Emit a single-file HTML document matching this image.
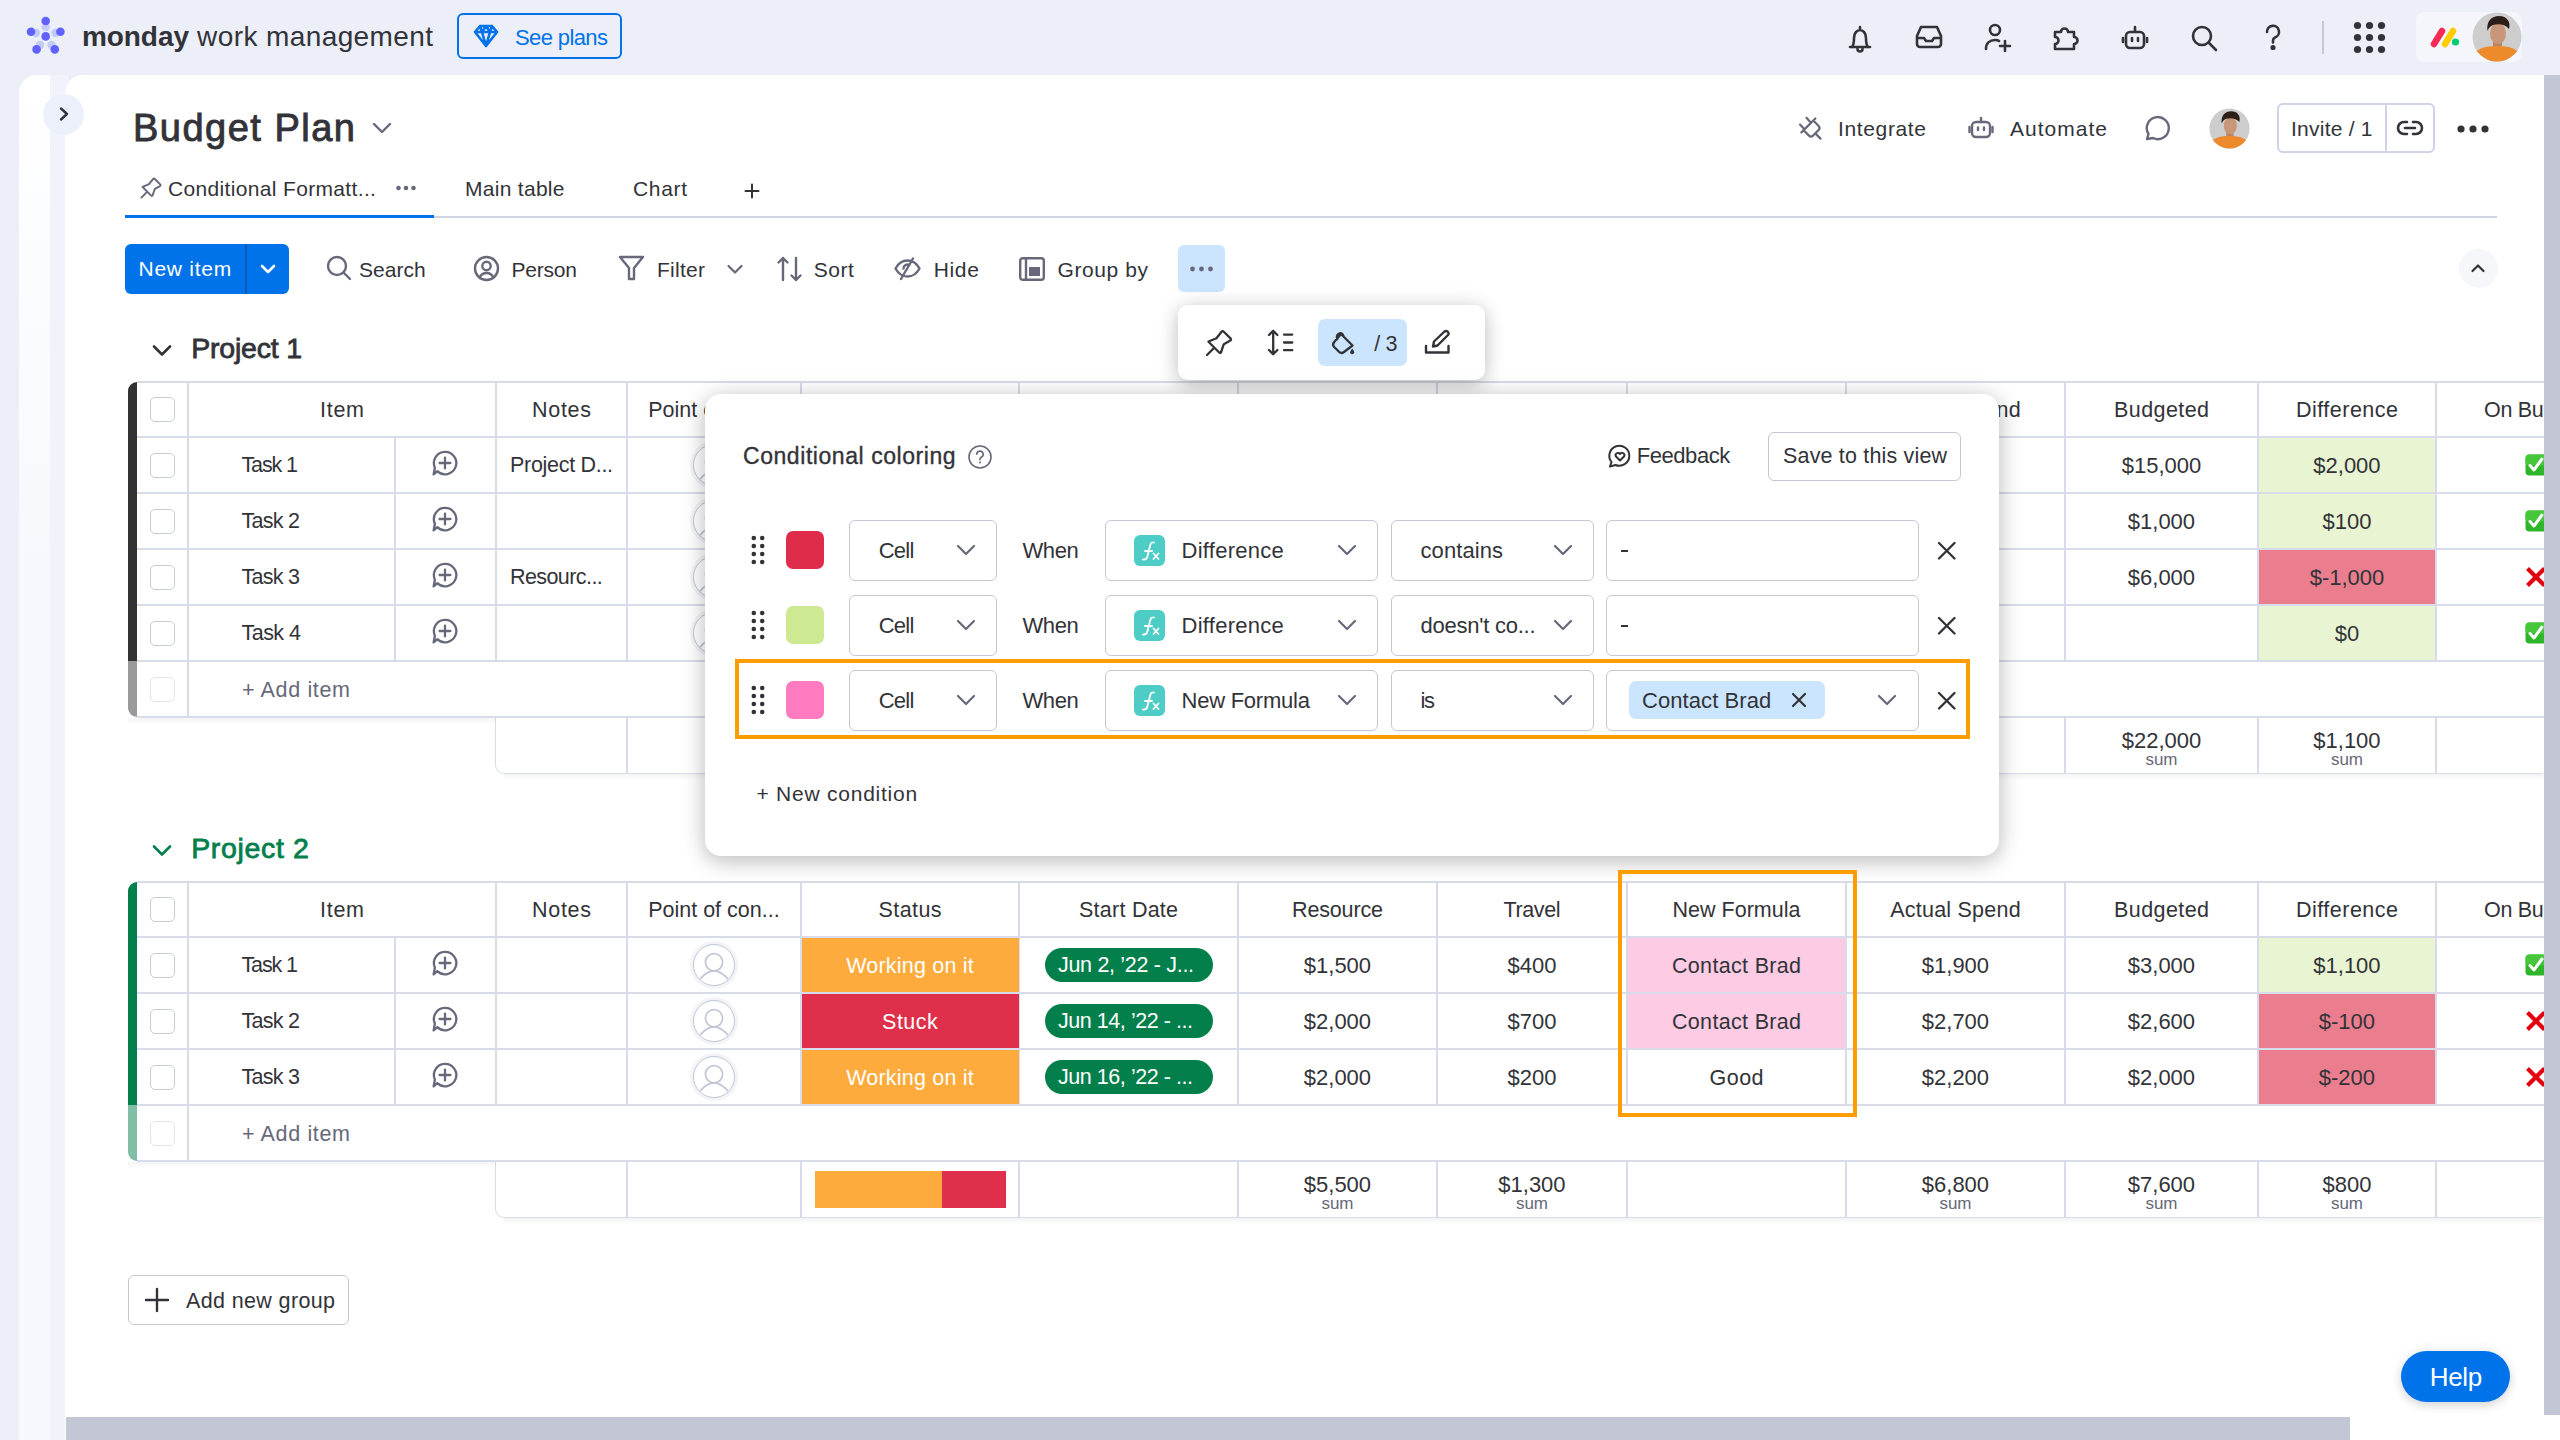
<!DOCTYPE html>
<html><head><meta charset="utf-8">
<style>
*{box-sizing:border-box;margin:0;padding:0}
html,body{width:2560px;height:1440px;overflow:hidden}
body{position:relative;background:#eceff8;font-family:"Liberation Sans",sans-serif;color:#323338}
.abs{position:absolute}
svg{display:block}
.ic{position:absolute;fill:none;stroke:#323338;stroke-width:2.6;stroke-linecap:round;stroke-linejoin:round}
.g{stroke:#676879}
.t{position:absolute;white-space:nowrap;line-height:1}
</style></head>
<body>


<div class="abs" style="left:19px;top:75px;width:50px;height:1365px;border-top-left-radius:18px;background:linear-gradient(90deg,rgba(255,255,255,0) 0,rgba(255,255,255,0) 31px,#f0f3fb 31px),linear-gradient(180deg,#ffffff 0,#f6f8fd 500px)"></div>
<div class="abs" style="left:65px;top:75px;width:2495px;height:1365px;background:#fff;border-top-left-radius:18px"></div>
<div class="abs" style="left:43px;top:94px;width:41px;height:41px;border-radius:50%;background:#ecf0fa"></div>
<svg class="ic" style="left:56px;top:104px;stroke-width:2.4" width="16" height="20" viewBox="0 0 16 20"><path d="M5 4.5l6 5.5-6 5.5"/></svg>
<div class="abs" style="left:2544px;top:75px;width:16px;height:1340px;background:#c3c6d4"></div>
<div class="abs" style="left:66px;top:1417px;width:2284px;height:23px;background:#c3c6d4"></div>

<svg class="abs" style="left:20px;top:12px" width="50" height="50" viewBox="20 12 50 50">
  <g fill="#c3cbf7">
   <circle cx="45.7" cy="27" r="4.2"/><circle cx="36" cy="33" r="4.2"/><circle cx="55.5" cy="33" r="4.2"/><circle cx="40" cy="45" r="4.2"/><circle cx="51.5" cy="45" r="4.2"/>
  </g>
  <g fill="#6161ff">
   <circle cx="45.7" cy="36.4" r="4.3"/><circle cx="45.7" cy="21" r="4.3"/><circle cx="31" cy="31.8" r="4.3"/><circle cx="60.4" cy="31.8" r="4.3"/><circle cx="36.6" cy="49.4" r="4.3"/><circle cx="54.8" cy="49.4" r="4.3"/>
  </g>
 </svg>
<div class="t" style="left:82.0px;top:23px;font-size:28px;color:#323338;font-weight:bold;letter-spacing:-0.08px;">monday</div>
<div class="t" style="left:197.1px;top:23px;font-size:28px;color:#323338;font-weight:normal;letter-spacing:0.40px;">work management</div>
<div class="abs" style="left:457px;top:13px;width:165px;height:46px;border:2px solid #0073ea;border-radius:6px"></div>
<svg class="ic" style="left:473px;top:24px;stroke:#0073ea;stroke-width:2.6" width="26" height="24" viewBox="0 0 26 24"><path d="M7 2h12l5 6-11 14L2 8z M2 8h22 M9 8l4 14 4-14 M7 2l2 6 4-6 4 6 2-6"/></svg>
<div class="t" style="left:515.0px;top:27px;font-size:22px;color:#0073ea;font-weight:normal;letter-spacing:-0.61px;">See plans</div>

 <svg class="ic" style="left:1846px;top:23px" width="28" height="30" viewBox="0 0 28 30"><path d="M4 24h20 M6 24c2-2 2-5 2-9 0-5 3-8 6-8s6 3 6 8c0 4 0 7 2 9 M14 4v3 M11.5 26a2.5 2.5 0 0 0 5 0"/></svg>
 <svg class="ic" style="left:1913px;top:24px" width="32" height="26" viewBox="0 0 32 26"><path d="M8 3h16l4 9v8a3 3 0 0 1-3 3H7a3 3 0 0 1-3-3v-8z M4 14h7l2 3h6l2-3h7"/></svg>
 <svg class="ic" style="left:1982px;top:22px" width="32" height="30" viewBox="0 0 32 30"><circle cx="13" cy="8" r="5"/><path d="M4 27c0-6 4-9 9-9 2 0 3 0 4 1 M23 19v10 M18 24h10"/></svg>
 <svg class="ic" style="left:2051px;top:22px" width="30" height="30" viewBox="0 0 30 30"><path d="M4 10h6a3.5 3.5 0 0 1 7 0h6v5a3.5 3.5 0 0 1 0 7v5H4v-5a3.5 3.5 0 0 0 0-7z"/></svg>
 <svg class="ic" style="left:2120px;top:24px" width="30" height="28" viewBox="0 0 30 28"><rect x="6" y="8" width="18" height="16" rx="4"/><path d="M15 3v5 M3 14v4 M27 14v4 M12 14v3 M18 14v3"/></svg>
 <svg class="ic" style="left:2189px;top:23px" width="30" height="30" viewBox="0 0 30 30"><circle cx="13" cy="13" r="9"/><path d="M20 20l7 7"/></svg>
 <svg class="ic" style="left:2262px;top:23px" width="22" height="30" viewBox="0 0 22 30"><path d="M5 9a6 6 0 1 1 8 5.5c-1.5.7-2 1.7-2 3v2"/><circle cx="11" cy="24.5" r="1.3" fill="#323338"/></svg>
 <div class="abs" style="left:2322px;top:21px;width:2px;height:33px;background:#c5c7d4"></div>
 <svg class="abs" style="left:2350px;top:18px" width="40" height="40" viewBox="2350 18 40 40" fill="#323338">
  <circle cx="2357.5" cy="25.5" r="3.6"/><circle cx="2369.5" cy="25.5" r="3.6"/><circle cx="2381.5" cy="25.5" r="3.6"/>
  <circle cx="2357.5" cy="37.5" r="3.6"/><circle cx="2369.5" cy="37.5" r="3.6"/><circle cx="2381.5" cy="37.5" r="3.6"/>
  <circle cx="2357.5" cy="49.5" r="3.6"/><circle cx="2369.5" cy="49.5" r="3.6"/><circle cx="2381.5" cy="49.5" r="3.6"/>
 </svg>
 <div class="abs" style="left:2416px;top:12px;width:106px;height:50px;border-radius:8px;background:#f5f6fc"></div>
 <svg class="abs" style="left:2425px;top:22px" width="40" height="30" viewBox="2425 22 40 30">
  <path d="M2434 44L2442 31" stroke="#f62b54" stroke-width="6.5" stroke-linecap="round"/>
  <path d="M2445 44L2453 31" stroke="#ffcc00" stroke-width="6.5" stroke-linecap="round"/>
  <circle cx="2455.5" cy="42" r="3.6" fill="#00ca72"/>
 </svg>

<svg class="abs" style="left:2472px;top:12px" width="50" height="50" viewBox="0 0 50 50">
  <defs><clipPath id="av1"><circle cx="25" cy="25" r="24.5"/></clipPath></defs>
  <g clip-path="url(#av1)">
   <rect width="50" height="50" fill="#cdcdcd"/>
   <rect x="21" y="28" width="9" height="8" fill="#b88568"/>
   <path d="M0 50L0 45C4 37 12 34 25 34C38 34 46 37 50 45L50 50z" fill="#ec8a2c"/>
   <ellipse cx="26" cy="21.5" rx="8" ry="10.5" fill="#c8977a"/>
   <path d="M15.5 19C14 9 20 4 27 4C35 4 39 10 37 17C33 12.5 27 11.5 21 13C18.5 14 16.5 16 15.5 19z" fill="#2b1f18"/>
  </g>
 </svg>
<div class="t" style="left:133.0px;top:109px;font-size:38px;color:#323338;font-weight:normal;letter-spacing:1.49px;-webkit-text-stroke:0.9px #323338;">Budget Plan</div>
<svg class="ic g" style="left:370px;top:118px;stroke-width:2.4" width="24" height="20" viewBox="0 0 24 20"><path d="M4 6l8 8 8-8"/></svg>
<svg class="ic g" style="left:1795px;top:113px;stroke-width:2.2" width="30" height="30" viewBox="1795 113 30 30"><path d="M1801.4 132.4L1815.4 118.5 M1800 124.6L1804.2 129 M1806.4 117.8L1810.5 122.2 M1803.6 130.2L1809 135.6Q1811 137.6 1813 135.6L1818.6 130Q1820.6 128 1818.6 126L1813.4 120.6 M1816.3 134.4L1820.5 138.6"/></svg>
<div class="t" style="left:1838.0px;top:118px;font-size:21px;color:#323338;font-weight:normal;letter-spacing:0.64px;">Integrate</div>
<svg class="ic g" style="left:1966px;top:115px;stroke-width:2.4" width="30" height="26" viewBox="0 0 30 26"><rect x="6" y="7" width="18" height="15" rx="4"/><path d="M15 3v4 M3.5 12v5 M26.5 12v5 M12 12.5v2.5 M18 12.5v2.5"/></svg>
<div class="t" style="left:2010.0px;top:118px;font-size:21px;color:#323338;font-weight:normal;letter-spacing:1.02px;">Automate</div>
<svg class="ic g" style="left:2143px;top:113px;stroke-width:2.4" width="30" height="30" viewBox="0 0 30 30"><path d="M4 26l1.5-5A11 11 0 1 1 10 25z"/></svg>
<svg class="abs" style="left:2209px;top:107.5px" width="41" height="41" viewBox="0 0 50 50">
  <defs><clipPath id="av2"><circle cx="25" cy="25" r="24.5"/></clipPath></defs>
  <g clip-path="url(#av2)">
   <rect width="50" height="50" fill="#cdcdcd"/>
   <rect x="21" y="28" width="9" height="8" fill="#b88568"/>
   <path d="M0 50L0 45C4 37 12 34 25 34C38 34 46 37 50 45L50 50z" fill="#ec8a2c"/>
   <ellipse cx="26" cy="21.5" rx="8" ry="10.5" fill="#c8977a"/>
   <path d="M15.5 19C14 9 20 4 27 4C35 4 39 10 37 17C33 12.5 27 11.5 21 13C18.5 14 16.5 16 15.5 19z" fill="#2b1f18"/>
  </g>
 </svg>
<div class="abs" style="left:2277px;top:103px;width:158px;height:50px;border:2px solid #d0d4e4;border-radius:6px"></div>
<div class="abs" style="left:2385px;top:104px;width:2px;height:48px;background:#d0d4e4"></div>
<div class="t" style="left:2291.0px;top:118px;font-size:21px;color:#323338;font-weight:normal;letter-spacing:0.24px;">Invite / 1</div>
<svg class="ic" style="left:2396px;top:117px;stroke-width:2.6" width="28" height="22" viewBox="0 0 28 22"><path d="M11 5H8a6 6 0 0 0 0 12h3 M17 5h3a6 6 0 0 1 0 12h-3 M9 11h10"/></svg>
<svg class="abs" style="left:2455px;top:122px" width="36" height="14" viewBox="0 0 36 14" fill="#323338"><circle cx="6" cy="7" r="3.6"/><circle cx="18" cy="7" r="3.6"/><circle cx="30" cy="7" r="3.6"/></svg>
<svg class="ic g" style="left:138.9px;top:176.4px;stroke-width:2.4" width="23.2" height="23.2" viewBox="1204 328 29 29"><path d="M1207 355L1213.5 348.5 M1208.5 341.5L1216.5 338.2L1221.5 331.8Q1222.6 330.5 1223.8 331.7L1230.5 338.4Q1231.6 339.6 1230.3 340.6L1223.8 344.2L1221 352.3Q1220.4 353.6 1219.2 352.5L1208.5 341.8z"/></svg>
<div class="t" style="left:168.0px;top:178px;font-size:21px;color:#323338;font-weight:normal;letter-spacing:0.34px;">Conditional Formatt...</div>
<svg class="abs" style="left:394px;top:183px" width="24" height="10" viewBox="0 0 24 10" fill="#676879"><circle cx="4.5" cy="5" r="2.3"/><circle cx="12" cy="5" r="2.3"/><circle cx="19.5" cy="5" r="2.3"/></svg>
<div class="t" style="left:465.0px;top:178px;font-size:21px;color:#323338;font-weight:normal;letter-spacing:0.29px;">Main table</div>
<div class="t" style="left:633.0px;top:178px;font-size:21px;color:#323338;font-weight:normal;letter-spacing:0.66px;">Chart</div>
<svg class="ic" style="left:742px;top:181px;stroke-width:2" width="20" height="20" viewBox="0 0 20 20"><path d="M10 3.5v13 M3.5 10h13"/></svg>
<div class="abs" style="left:125px;top:216px;width:2372px;height:2px;background:#d0d4e4"></div>
<div class="abs" style="left:125px;top:214.5px;width:309px;height:3.5px;background:#0073ea"></div>
<div class="abs" style="left:125px;top:244px;width:164px;height:50px;border-radius:6px;background:#0073ea"></div>
<div class="abs" style="left:245px;top:244px;width:1.5px;height:50px;background:#0a5ab6"></div>
<div class="t" style="left:138.5px;top:258px;font-size:21px;color:#ffffff;font-weight:normal;letter-spacing:0.75px;">New item</div>
<svg class="ic" style="left:258px;top:259px;stroke:#fff;stroke-width:2.6" width="20" height="20" viewBox="0 0 20 20"><path d="M4 7l6 6 6-6"/></svg>
<svg class="ic g" style="left:325px;top:254px;stroke-width:2.4" width="28" height="28" viewBox="0 0 28 28"><circle cx="12" cy="12" r="9"/><path d="M18.5 18.5l6.5 6.5"/></svg>
<div class="t" style="left:359.0px;top:259px;font-size:21px;color:#323338;font-weight:normal;letter-spacing:0.03px;">Search</div>
<svg class="ic g" style="left:472px;top:254px;stroke-width:2.4" width="29" height="29" viewBox="0 0 29 29"><circle cx="14.5" cy="14.5" r="11.5"/><circle cx="14.5" cy="12" r="4.2"/><path d="M7.5 23.5c1.5-3 4-4.5 7-4.5s5.5 1.5 7 4.5"/></svg>
<div class="t" style="left:511.6px;top:259px;font-size:21px;color:#323338;font-weight:normal;letter-spacing:-0.23px;">Person</div>
<svg class="ic g" style="left:617px;top:254px;stroke-width:2.4" width="29" height="29" viewBox="0 0 29 29"><path d="M3 3h23l-9 11v11h-5V14z"/></svg>
<div class="t" style="left:657.0px;top:259px;font-size:21px;color:#323338;font-weight:normal;letter-spacing:0.28px;">Filter</div>
<svg class="ic g" style="left:725px;top:260px;stroke-width:2.2" width="20" height="18" viewBox="0 0 20 18"><path d="M3.5 6l6.5 6.5 6.5-6.5"/></svg>
<svg class="ic g" style="left:776px;top:255px;stroke-width:2.4" width="28" height="28" viewBox="0 0 28 28"><path d="M7 25V3 M2.5 7.5L7 3l4.5 4.5 M20 3v22 M15.5 20.5L20 25l4.5-4.5"/></svg>
<div class="t" style="left:813.8px;top:259px;font-size:21px;color:#323338;font-weight:normal;letter-spacing:0.49px;">Sort</div>
<svg class="ic g" style="left:893px;top:256px;stroke-width:2.4" width="29" height="25" viewBox="0 0 29 25"><path d="M2.5 12.5C5.5 7 9.5 4.5 14.5 4.5S23.5 7 26.5 12.5C23.5 18 19.5 20.5 14.5 20.5S5.5 18 2.5 12.5z M10.5 12.5a4 4 0 0 1 6-3.5 M20 2.5L8 23"/></svg>
<div class="t" style="left:933.8px;top:259px;font-size:21px;color:#323338;font-weight:normal;letter-spacing:0.61px;">Hide</div>
<svg class="abs" style="left:1018px;top:256px" width="28" height="26" viewBox="0 0 28 26"><rect x="2.2" y="2.2" width="23.6" height="21.6" rx="2.5" fill="none" stroke="#676879" stroke-width="2.4"/><path d="M8 2.5v21" stroke="#676879" stroke-width="2.4"/><rect x="11" y="11" width="11" height="9" fill="#676879"/></svg>
<div class="t" style="left:1057.5px;top:259px;font-size:21px;color:#323338;font-weight:normal;letter-spacing:0.58px;">Group by</div>
<div class="abs" style="left:1178px;top:245px;width:47px;height:47px;border-radius:6px;background:#cce5ff"></div>
<svg class="abs" style="left:1188px;top:264px" width="27" height="10" viewBox="0 0 27 10" fill="#676879"><circle cx="4.5" cy="5" r="2.4"/><circle cx="13.5" cy="5" r="2.4"/><circle cx="22.5" cy="5" r="2.4"/></svg>
<div class="abs" style="left:2459px;top:249px;width:39px;height:39px;border-radius:50%;background:#f6f7fb"></div>
<svg class="ic" style="left:2468px;top:258px;stroke-width:2.2" width="20" height="20" viewBox="0 0 20 20"><path d="M4.5 13l5.5-5.5 5.5 5.5"/></svg>
<div class="abs" style="left:0;top:0;width:2544px;height:1417px;overflow:hidden">
<svg class="ic" style="left:150px;top:340px;stroke:#323338;stroke-width:2.6" width="24" height="20" viewBox="0 0 24 20"><path d="M4 6.5l8 8 8-8"/></svg>
<div class="t" style="left:191.2px;top:334px;font-size:28.5px;color:#323338;font-weight:normal;letter-spacing:-0.21px;-webkit-text-stroke:0.8px #323338;">Project 1</div>
<div class="abs" style="left:128px;top:382px;width:9px;height:279px;background:#333333;border-top-left-radius:9px"></div>
<div class="abs" style="left:128px;top:661px;width:9px;height:56px;background:#9a9a9a;border-bottom-left-radius:9px"></div>
<div class="abs" style="left:137px;top:381.25px;width:2407px;height:1.5px;background:#d8dbe9"></div>
<div class="abs" style="left:137px;top:436.25px;width:2407px;height:1.5px;background:#d8dbe9"></div>
<div class="abs" style="left:137px;top:492.25px;width:2407px;height:1.5px;background:#d8dbe9"></div>
<div class="abs" style="left:137px;top:548.25px;width:2407px;height:1.5px;background:#d8dbe9"></div>
<div class="abs" style="left:137px;top:604.25px;width:2407px;height:1.5px;background:#d8dbe9"></div>
<div class="abs" style="left:137px;top:660.25px;width:2407px;height:1.5px;background:#d8dbe9"></div>
<div class="abs" style="left:137px;top:716.25px;width:2407px;height:1.5px;background:#d8dbe9"></div>
<div class="abs" style="left:187.25px;top:382px;width:1.5px;height:279px;background:#d8dbe9"></div>
<div class="abs" style="left:495.25px;top:382px;width:1.5px;height:279px;background:#d8dbe9"></div>
<div class="abs" style="left:626.25px;top:382px;width:1.5px;height:279px;background:#d8dbe9"></div>
<div class="abs" style="left:800.25px;top:382px;width:1.5px;height:279px;background:#d8dbe9"></div>
<div class="abs" style="left:1018.25px;top:382px;width:1.5px;height:279px;background:#d8dbe9"></div>
<div class="abs" style="left:1237.25px;top:382px;width:1.5px;height:279px;background:#d8dbe9"></div>
<div class="abs" style="left:1436.25px;top:382px;width:1.5px;height:279px;background:#d8dbe9"></div>
<div class="abs" style="left:1626.25px;top:382px;width:1.5px;height:279px;background:#d8dbe9"></div>
<div class="abs" style="left:1845.25px;top:382px;width:1.5px;height:279px;background:#d8dbe9"></div>
<div class="abs" style="left:2064.25px;top:382px;width:1.5px;height:279px;background:#d8dbe9"></div>
<div class="abs" style="left:2257.25px;top:382px;width:1.5px;height:279px;background:#d8dbe9"></div>
<div class="abs" style="left:2435.25px;top:382px;width:1.5px;height:279px;background:#d8dbe9"></div>
<div class="abs" style="left:394.25px;top:437px;width:1.5px;height:224px;background:#d8dbe9"></div>
<div class="abs" style="left:187.25px;top:661px;width:1.5px;height:56px;background:#d8dbe9"></div>
<div class="abs" style="left:495.25px;top:717px;width:2048px;height:56.75px;border-left:1.5px solid #d8dbe9;border-bottom:1.5px solid #d8dbe9;border-bottom-left-radius:9px"></div>
<div class="abs" style="left:626.25px;top:717px;width:1.5px;height:56px;background:#d8dbe9"></div>
<div class="abs" style="left:800.25px;top:717px;width:1.5px;height:56px;background:#d8dbe9"></div>
<div class="abs" style="left:1018.25px;top:717px;width:1.5px;height:56px;background:#d8dbe9"></div>
<div class="abs" style="left:1237.25px;top:717px;width:1.5px;height:56px;background:#d8dbe9"></div>
<div class="abs" style="left:1436.25px;top:717px;width:1.5px;height:56px;background:#d8dbe9"></div>
<div class="abs" style="left:1626.25px;top:717px;width:1.5px;height:56px;background:#d8dbe9"></div>
<div class="abs" style="left:1845.25px;top:717px;width:1.5px;height:56px;background:#d8dbe9"></div>
<div class="abs" style="left:2064.25px;top:717px;width:1.5px;height:56px;background:#d8dbe9"></div>
<div class="abs" style="left:2257.25px;top:717px;width:1.5px;height:56px;background:#d8dbe9"></div>
<div class="abs" style="left:2435.25px;top:717px;width:1.5px;height:56px;background:#d8dbe9"></div>
<div class="abs" style="left:128px;top:718px;width:368px;height:7px;background:linear-gradient(180deg,rgba(0,0,0,0.045),rgba(0,0,0,0))"></div>
<div class="abs" style="left:504px;top:774px;width:2040px;height:7px;background:linear-gradient(180deg,rgba(0,0,0,0.045),rgba(0,0,0,0))"></div>
<div class="t" style="left:320.0px;top:400px;font-size:21.5px;color:#323338;font-weight:normal;letter-spacing:0.73px;">Item</div>
<div class="t" style="left:532.0px;top:400px;font-size:21.5px;color:#323338;font-weight:normal;letter-spacing:0.72px;">Notes</div>
<div class="t" style="left:648.2px;top:400px;font-size:21.5px;color:#323338;font-weight:normal;letter-spacing:0.00px;">Point of con...</div>
<div class="t" style="left:878.5px;top:400px;font-size:21.5px;color:#323338;font-weight:normal;letter-spacing:0.41px;">Status</div>
<div class="t" style="left:1079.0px;top:400px;font-size:21.5px;color:#323338;font-weight:normal;letter-spacing:0.25px;">Start Date</div>
<div class="t" style="left:1292.0px;top:400px;font-size:21.5px;color:#323338;font-weight:normal;letter-spacing:-0.15px;">Resource</div>
<div class="t" style="left:1503.5px;top:400px;font-size:21.5px;color:#323338;font-weight:normal;letter-spacing:-0.38px;">Travel</div>
<div class="t" style="left:1672.5px;top:400px;font-size:21.5px;color:#323338;font-weight:normal;letter-spacing:0.01px;">New Formula</div>
<div class="t" style="left:1890.2px;top:400px;font-size:21.5px;color:#323338;font-weight:normal;letter-spacing:0.23px;">Actual Spend</div>
<div class="t" style="left:2114.0px;top:400px;font-size:21.5px;color:#323338;font-weight:normal;letter-spacing:0.43px;">Budgeted</div>
<div class="t" style="left:2296.0px;top:400px;font-size:21.5px;color:#323338;font-weight:normal;letter-spacing:0.49px;">Difference</div>
<div class="t" style="left:2484.0px;top:400px;font-size:21.5px;color:#323338;font-weight:normal;letter-spacing:-0.30px;">On Budget</div>
<div class="abs" style="left:150px;top:397px;width:25px;height:25px;border:1.5px solid #c9ccdb;border-radius:5px;background:#fff"></div>
<div class="abs" style="left:150px;top:453px;width:25px;height:25px;border:1.5px solid #c9ccdb;border-radius:5px;background:#fff"></div>
<div class="abs" style="left:150px;top:509px;width:25px;height:25px;border:1.5px solid #c9ccdb;border-radius:5px;background:#fff"></div>
<div class="abs" style="left:150px;top:565px;width:25px;height:25px;border:1.5px solid #c9ccdb;border-radius:5px;background:#fff"></div>
<div class="abs" style="left:150px;top:621px;width:25px;height:25px;border:1.5px solid #c9ccdb;border-radius:5px;background:#fff"></div>
<div class="abs" style="left:150px;top:677px;width:25px;height:25px;border:1.5px solid #e3e5ee;border-radius:5px;background:#fff"></div>
<div class="t" style="left:242.0px;top:680px;font-size:21.5px;color:#676879;font-weight:normal;letter-spacing:0.64px;">+ Add item</div>
<div class="t" style="left:241.5px;top:455px;font-size:21.5px;color:#323338;font-weight:normal;letter-spacing:-1.13px;">Task 1</div>
<svg class="ic g" style="left:430px;top:448px;stroke-width:2.3" width="30" height="30" viewBox="0 0 30 30"><path d="M7.3 23.2A11.2 11.2 0 1 0 4.9 19.8L3.6 26.4z M15 9.6v10.8 M9.6 15h10.8"/></svg>
<div class="t" style="left:510.0px;top:455px;font-size:21.5px;color:#323338;font-weight:normal;letter-spacing:-0.30px;">Project D...</div>
<div class="abs" style="left:693px;top:444px;width:42px;height:42px;border-radius:50%;border:1.6px solid #c3c6d4;background:#fff;box-shadow:0 0 0 3px #f3f4f8"></div><svg class="ic" style="left:693px;top:444px;stroke:#c3c6d4;stroke-width:1.7" width="42" height="42" viewBox="0 0 42 42"><circle cx="21" cy="18.2" r="8.6"/><path d="M7.4 34.6Q21 19 34.6 34.6"/></svg>
<div class="t" style="left:2121.7px;top:455px;font-size:22px;color:#323338;font-weight:normal;letter-spacing:0.00px;">$15,000</div>
<div class="abs" style="left:2258.75px;top:437.75px;width:176.5px;height:54.5px;background:#e8f4d2;"></div>
<div class="t" style="left:2313.3px;top:455px;font-size:22px;color:#323338;font-weight:normal;letter-spacing:0.00px;">$2,000</div>
<svg class="abs" style="left:2525px;top:454px" width="22" height="22" viewBox="0 0 22 22"><rect x="0.5" y="0.5" width="21" height="21" rx="4" fill="#2fb52a"/><rect x="0.5" y="0.5" width="21" height="11" rx="4" fill="#45c63b"/><path d="M5 11.5l4 4.5 8-11" fill="none" stroke="#fff" stroke-width="3" stroke-linecap="round" stroke-linejoin="round"/></svg>
<div class="t" style="left:241.5px;top:511px;font-size:21.5px;color:#323338;font-weight:normal;letter-spacing:-0.73px;">Task 2</div>
<svg class="ic g" style="left:430px;top:504px;stroke-width:2.3" width="30" height="30" viewBox="0 0 30 30"><path d="M7.3 23.2A11.2 11.2 0 1 0 4.9 19.8L3.6 26.4z M15 9.6v10.8 M9.6 15h10.8"/></svg>
<div class="abs" style="left:693px;top:500px;width:42px;height:42px;border-radius:50%;border:1.6px solid #c3c6d4;background:#fff;box-shadow:0 0 0 3px #f3f4f8"></div><svg class="ic" style="left:693px;top:500px;stroke:#c3c6d4;stroke-width:1.7" width="42" height="42" viewBox="0 0 42 42"><circle cx="21" cy="18.2" r="8.6"/><path d="M7.4 34.6Q21 19 34.6 34.6"/></svg>
<div class="t" style="left:2127.8px;top:511px;font-size:22px;color:#323338;font-weight:normal;letter-spacing:0.00px;">$1,000</div>
<div class="abs" style="left:2258.75px;top:493.75px;width:176.5px;height:54.5px;background:#e8f4d2;"></div>
<div class="t" style="left:2322.5px;top:511px;font-size:22px;color:#323338;font-weight:normal;letter-spacing:0.00px;">$100</div>
<svg class="abs" style="left:2525px;top:510px" width="22" height="22" viewBox="0 0 22 22"><rect x="0.5" y="0.5" width="21" height="21" rx="4" fill="#2fb52a"/><rect x="0.5" y="0.5" width="21" height="11" rx="4" fill="#45c63b"/><path d="M5 11.5l4 4.5 8-11" fill="none" stroke="#fff" stroke-width="3" stroke-linecap="round" stroke-linejoin="round"/></svg>
<div class="t" style="left:241.5px;top:567px;font-size:21.5px;color:#323338;font-weight:normal;letter-spacing:-0.73px;">Task 3</div>
<svg class="ic g" style="left:430px;top:560px;stroke-width:2.3" width="30" height="30" viewBox="0 0 30 30"><path d="M7.3 23.2A11.2 11.2 0 1 0 4.9 19.8L3.6 26.4z M15 9.6v10.8 M9.6 15h10.8"/></svg>
<div class="t" style="left:510.0px;top:567px;font-size:21.5px;color:#323338;font-weight:normal;letter-spacing:-0.58px;">Resourc...</div>
<div class="abs" style="left:693px;top:556px;width:42px;height:42px;border-radius:50%;border:1.6px solid #c3c6d4;background:#fff;box-shadow:0 0 0 3px #f3f4f8"></div><svg class="ic" style="left:693px;top:556px;stroke:#c3c6d4;stroke-width:1.7" width="42" height="42" viewBox="0 0 42 42"><circle cx="21" cy="18.2" r="8.6"/><path d="M7.4 34.6Q21 19 34.6 34.6"/></svg>
<div class="t" style="left:2127.8px;top:567px;font-size:22px;color:#323338;font-weight:normal;letter-spacing:0.00px;">$6,000</div>
<div class="abs" style="left:2258.75px;top:549.75px;width:176.5px;height:54.5px;background:#eb7e8e;"></div>
<div class="t" style="left:2309.7px;top:567px;font-size:22px;color:#323338;font-weight:normal;letter-spacing:0.00px;">$-1,000</div>
<svg class="abs" style="left:2525px;top:566px" width="22" height="22" viewBox="0 0 22 22"><path d="M2.5 2.5l17 17 M19.5 2.5l-17 17" fill="none" stroke="#e3000f" stroke-width="4.2" stroke-linecap="butt"/></svg>
<div class="t" style="left:241.5px;top:623px;font-size:21.5px;color:#323338;font-weight:normal;letter-spacing:-0.53px;">Task 4</div>
<svg class="ic g" style="left:430px;top:616px;stroke-width:2.3" width="30" height="30" viewBox="0 0 30 30"><path d="M7.3 23.2A11.2 11.2 0 1 0 4.9 19.8L3.6 26.4z M15 9.6v10.8 M9.6 15h10.8"/></svg>
<div class="abs" style="left:693px;top:612px;width:42px;height:42px;border-radius:50%;border:1.6px solid #c3c6d4;background:#fff;box-shadow:0 0 0 3px #f3f4f8"></div><svg class="ic" style="left:693px;top:612px;stroke:#c3c6d4;stroke-width:1.7" width="42" height="42" viewBox="0 0 42 42"><circle cx="21" cy="18.2" r="8.6"/><path d="M7.4 34.6Q21 19 34.6 34.6"/></svg>
<div class="abs" style="left:2258.75px;top:605.75px;width:176.5px;height:54.5px;background:#e8f4d2;"></div>
<div class="t" style="left:2334.8px;top:623px;font-size:22px;color:#323338;font-weight:normal;letter-spacing:0.00px;">$0</div>
<svg class="abs" style="left:2525px;top:622px" width="22" height="22" viewBox="0 0 22 22"><rect x="0.5" y="0.5" width="21" height="21" rx="4" fill="#2fb52a"/><rect x="0.5" y="0.5" width="21" height="11" rx="4" fill="#45c63b"/><path d="M5 11.5l4 4.5 8-11" fill="none" stroke="#fff" stroke-width="3" stroke-linecap="round" stroke-linejoin="round"/></svg>
<div class="t" style="left:2121.7px;top:730px;font-size:22px;color:#323338;font-weight:normal;letter-spacing:0.00px;">$22,000</div>
<div class="t" style="left:2145.4px;top:751px;font-size:17px;color:#676879;font-weight:normal;letter-spacing:0.00px;">sum</div>
<div class="t" style="left:2313.3px;top:730px;font-size:22px;color:#323338;font-weight:normal;letter-spacing:0.00px;">$1,100</div>
<div class="t" style="left:2330.9px;top:751px;font-size:17px;color:#676879;font-weight:normal;letter-spacing:0.00px;">sum</div>
<svg class="ic" style="left:150px;top:840px;stroke:#037f4c;stroke-width:2.6" width="24" height="20" viewBox="0 0 24 20"><path d="M4 6.5l8 8 8-8"/></svg>
<div class="t" style="left:191.2px;top:834px;font-size:28.5px;color:#037f4c;font-weight:normal;letter-spacing:0.66px;-webkit-text-stroke:0.8px #037f4c;">Project 2</div>
<div class="abs" style="left:128px;top:882px;width:9px;height:223px;background:#037f4c;border-top-left-radius:9px"></div>
<div class="abs" style="left:128px;top:1105px;width:9px;height:56px;background:#80bfa5;border-bottom-left-radius:9px"></div>
<div class="abs" style="left:137px;top:881.25px;width:2407px;height:1.5px;background:#d8dbe9"></div>
<div class="abs" style="left:137px;top:936.25px;width:2407px;height:1.5px;background:#d8dbe9"></div>
<div class="abs" style="left:137px;top:992.25px;width:2407px;height:1.5px;background:#d8dbe9"></div>
<div class="abs" style="left:137px;top:1048.25px;width:2407px;height:1.5px;background:#d8dbe9"></div>
<div class="abs" style="left:137px;top:1104.25px;width:2407px;height:1.5px;background:#d8dbe9"></div>
<div class="abs" style="left:137px;top:1160.25px;width:2407px;height:1.5px;background:#d8dbe9"></div>
<div class="abs" style="left:187.25px;top:882px;width:1.5px;height:223px;background:#d8dbe9"></div>
<div class="abs" style="left:495.25px;top:882px;width:1.5px;height:223px;background:#d8dbe9"></div>
<div class="abs" style="left:626.25px;top:882px;width:1.5px;height:223px;background:#d8dbe9"></div>
<div class="abs" style="left:800.25px;top:882px;width:1.5px;height:223px;background:#d8dbe9"></div>
<div class="abs" style="left:1018.25px;top:882px;width:1.5px;height:223px;background:#d8dbe9"></div>
<div class="abs" style="left:1237.25px;top:882px;width:1.5px;height:223px;background:#d8dbe9"></div>
<div class="abs" style="left:1436.25px;top:882px;width:1.5px;height:223px;background:#d8dbe9"></div>
<div class="abs" style="left:1626.25px;top:882px;width:1.5px;height:223px;background:#d8dbe9"></div>
<div class="abs" style="left:1845.25px;top:882px;width:1.5px;height:223px;background:#d8dbe9"></div>
<div class="abs" style="left:2064.25px;top:882px;width:1.5px;height:223px;background:#d8dbe9"></div>
<div class="abs" style="left:2257.25px;top:882px;width:1.5px;height:223px;background:#d8dbe9"></div>
<div class="abs" style="left:2435.25px;top:882px;width:1.5px;height:223px;background:#d8dbe9"></div>
<div class="abs" style="left:394.25px;top:937px;width:1.5px;height:168px;background:#d8dbe9"></div>
<div class="abs" style="left:187.25px;top:1105px;width:1.5px;height:56px;background:#d8dbe9"></div>
<div class="abs" style="left:495.25px;top:1161px;width:2048px;height:56.75px;border-left:1.5px solid #d8dbe9;border-bottom:1.5px solid #d8dbe9;border-bottom-left-radius:9px"></div>
<div class="abs" style="left:626.25px;top:1161px;width:1.5px;height:56px;background:#d8dbe9"></div>
<div class="abs" style="left:800.25px;top:1161px;width:1.5px;height:56px;background:#d8dbe9"></div>
<div class="abs" style="left:1018.25px;top:1161px;width:1.5px;height:56px;background:#d8dbe9"></div>
<div class="abs" style="left:1237.25px;top:1161px;width:1.5px;height:56px;background:#d8dbe9"></div>
<div class="abs" style="left:1436.25px;top:1161px;width:1.5px;height:56px;background:#d8dbe9"></div>
<div class="abs" style="left:1626.25px;top:1161px;width:1.5px;height:56px;background:#d8dbe9"></div>
<div class="abs" style="left:1845.25px;top:1161px;width:1.5px;height:56px;background:#d8dbe9"></div>
<div class="abs" style="left:2064.25px;top:1161px;width:1.5px;height:56px;background:#d8dbe9"></div>
<div class="abs" style="left:2257.25px;top:1161px;width:1.5px;height:56px;background:#d8dbe9"></div>
<div class="abs" style="left:2435.25px;top:1161px;width:1.5px;height:56px;background:#d8dbe9"></div>
<div class="abs" style="left:128px;top:1162px;width:368px;height:7px;background:linear-gradient(180deg,rgba(0,0,0,0.045),rgba(0,0,0,0))"></div>
<div class="abs" style="left:504px;top:1218px;width:2040px;height:7px;background:linear-gradient(180deg,rgba(0,0,0,0.045),rgba(0,0,0,0))"></div>
<div class="t" style="left:320.0px;top:900px;font-size:21.5px;color:#323338;font-weight:normal;letter-spacing:0.73px;">Item</div>
<div class="t" style="left:532.0px;top:900px;font-size:21.5px;color:#323338;font-weight:normal;letter-spacing:0.72px;">Notes</div>
<div class="t" style="left:648.2px;top:900px;font-size:21.5px;color:#323338;font-weight:normal;letter-spacing:0.00px;">Point of con...</div>
<div class="t" style="left:878.5px;top:900px;font-size:21.5px;color:#323338;font-weight:normal;letter-spacing:0.41px;">Status</div>
<div class="t" style="left:1079.0px;top:900px;font-size:21.5px;color:#323338;font-weight:normal;letter-spacing:0.25px;">Start Date</div>
<div class="t" style="left:1292.0px;top:900px;font-size:21.5px;color:#323338;font-weight:normal;letter-spacing:-0.15px;">Resource</div>
<div class="t" style="left:1503.5px;top:900px;font-size:21.5px;color:#323338;font-weight:normal;letter-spacing:-0.38px;">Travel</div>
<div class="t" style="left:1672.5px;top:900px;font-size:21.5px;color:#323338;font-weight:normal;letter-spacing:0.01px;">New Formula</div>
<div class="t" style="left:1890.2px;top:900px;font-size:21.5px;color:#323338;font-weight:normal;letter-spacing:0.23px;">Actual Spend</div>
<div class="t" style="left:2114.0px;top:900px;font-size:21.5px;color:#323338;font-weight:normal;letter-spacing:0.43px;">Budgeted</div>
<div class="t" style="left:2296.0px;top:900px;font-size:21.5px;color:#323338;font-weight:normal;letter-spacing:0.49px;">Difference</div>
<div class="t" style="left:2484.0px;top:900px;font-size:21.5px;color:#323338;font-weight:normal;letter-spacing:-0.30px;">On Budget</div>
<div class="abs" style="left:150px;top:897px;width:25px;height:25px;border:1.5px solid #c9ccdb;border-radius:5px;background:#fff"></div>
<div class="abs" style="left:150px;top:953px;width:25px;height:25px;border:1.5px solid #c9ccdb;border-radius:5px;background:#fff"></div>
<div class="abs" style="left:150px;top:1009px;width:25px;height:25px;border:1.5px solid #c9ccdb;border-radius:5px;background:#fff"></div>
<div class="abs" style="left:150px;top:1065px;width:25px;height:25px;border:1.5px solid #c9ccdb;border-radius:5px;background:#fff"></div>
<div class="abs" style="left:150px;top:1121px;width:25px;height:25px;border:1.5px solid #e3e5ee;border-radius:5px;background:#fff"></div>
<div class="t" style="left:242.0px;top:1124px;font-size:21.5px;color:#676879;font-weight:normal;letter-spacing:0.64px;">+ Add item</div>
<div class="t" style="left:241.5px;top:955px;font-size:21.5px;color:#323338;font-weight:normal;letter-spacing:-1.13px;">Task 1</div>
<svg class="ic g" style="left:430px;top:948px;stroke-width:2.3" width="30" height="30" viewBox="0 0 30 30"><path d="M7.3 23.2A11.2 11.2 0 1 0 4.9 19.8L3.6 26.4z M15 9.6v10.8 M9.6 15h10.8"/></svg>
<div class="abs" style="left:693px;top:944px;width:42px;height:42px;border-radius:50%;border:1.6px solid #c3c6d4;background:#fff;box-shadow:0 0 0 3px #f3f4f8"></div><svg class="ic" style="left:693px;top:944px;stroke:#c3c6d4;stroke-width:1.7" width="42" height="42" viewBox="0 0 42 42"><circle cx="21" cy="18.2" r="8.6"/><path d="M7.4 34.6Q21 19 34.6 34.6"/></svg>
<div class="abs" style="left:802px;top:937.75px;width:217px;height:54.5px;background:#fdab3d;"></div>
<div class="t" style="left:846.2px;top:956px;font-size:21.5px;color:#ffffff;font-weight:normal;letter-spacing:0.21px;">Working on it</div>
<div class="abs" style="left:1045px;top:948px;width:168px;height:34px;border-radius:17px;background:#037f4c"></div>
<div class="t" style="left:1058.0px;top:955px;font-size:21.5px;color:#ffffff;font-weight:normal;letter-spacing:-0.31px;">Jun 2, ’22 - J...</div>
<div class="t" style="left:1303.8px;top:955px;font-size:22px;color:#323338;font-weight:normal;letter-spacing:0.00px;">$1,500</div>
<div class="t" style="left:1507.5px;top:955px;font-size:22px;color:#323338;font-weight:normal;letter-spacing:0.00px;">$400</div>
<div class="t" style="left:1921.8px;top:955px;font-size:22px;color:#323338;font-weight:normal;letter-spacing:0.00px;">$1,900</div>
<div class="t" style="left:2127.8px;top:955px;font-size:22px;color:#323338;font-weight:normal;letter-spacing:0.00px;">$3,000</div>
<div class="abs" style="left:2258.75px;top:937.75px;width:176.5px;height:54.5px;background:#e8f4d2;"></div>
<div class="t" style="left:2313.3px;top:955px;font-size:22px;color:#323338;font-weight:normal;letter-spacing:0.00px;">$1,100</div>
<div class="abs" style="left:1628px;top:937.75px;width:217px;height:54.5px;background:#fecbe4;"></div>
<div class="t" style="left:1672.0px;top:956px;font-size:21.5px;color:#323338;font-weight:normal;letter-spacing:0.32px;">Contact Brad</div>
<svg class="abs" style="left:2525px;top:954px" width="22" height="22" viewBox="0 0 22 22"><rect x="0.5" y="0.5" width="21" height="21" rx="4" fill="#2fb52a"/><rect x="0.5" y="0.5" width="21" height="11" rx="4" fill="#45c63b"/><path d="M5 11.5l4 4.5 8-11" fill="none" stroke="#fff" stroke-width="3" stroke-linecap="round" stroke-linejoin="round"/></svg>
<div class="t" style="left:241.5px;top:1011px;font-size:21.5px;color:#323338;font-weight:normal;letter-spacing:-0.73px;">Task 2</div>
<svg class="ic g" style="left:430px;top:1004px;stroke-width:2.3" width="30" height="30" viewBox="0 0 30 30"><path d="M7.3 23.2A11.2 11.2 0 1 0 4.9 19.8L3.6 26.4z M15 9.6v10.8 M9.6 15h10.8"/></svg>
<div class="abs" style="left:693px;top:1000px;width:42px;height:42px;border-radius:50%;border:1.6px solid #c3c6d4;background:#fff;box-shadow:0 0 0 3px #f3f4f8"></div><svg class="ic" style="left:693px;top:1000px;stroke:#c3c6d4;stroke-width:1.7" width="42" height="42" viewBox="0 0 42 42"><circle cx="21" cy="18.2" r="8.6"/><path d="M7.4 34.6Q21 19 34.6 34.6"/></svg>
<div class="abs" style="left:802px;top:993.75px;width:217px;height:54.5px;background:#df2f4a;"></div>
<div class="t" style="left:882.1px;top:1012px;font-size:21.5px;color:#ffffff;font-weight:normal;letter-spacing:0.46px;">Stuck</div>
<div class="abs" style="left:1045px;top:1004px;width:168px;height:34px;border-radius:17px;background:#037f4c"></div>
<div class="t" style="left:1058.0px;top:1011px;font-size:21.5px;color:#ffffff;font-weight:normal;letter-spacing:-0.45px;">Jun 14, ’22 - ...</div>
<div class="t" style="left:1303.8px;top:1011px;font-size:22px;color:#323338;font-weight:normal;letter-spacing:0.00px;">$2,000</div>
<div class="t" style="left:1507.5px;top:1011px;font-size:22px;color:#323338;font-weight:normal;letter-spacing:0.00px;">$700</div>
<div class="t" style="left:1921.8px;top:1011px;font-size:22px;color:#323338;font-weight:normal;letter-spacing:0.00px;">$2,700</div>
<div class="t" style="left:2127.8px;top:1011px;font-size:22px;color:#323338;font-weight:normal;letter-spacing:0.00px;">$2,600</div>
<div class="abs" style="left:2258.75px;top:993.75px;width:176.5px;height:54.5px;background:#eb7e8e;"></div>
<div class="t" style="left:2318.8px;top:1011px;font-size:22px;color:#323338;font-weight:normal;letter-spacing:0.00px;">$-100</div>
<div class="abs" style="left:1628px;top:993.75px;width:217px;height:54.5px;background:#fecbe4;"></div>
<div class="t" style="left:1672.0px;top:1012px;font-size:21.5px;color:#323338;font-weight:normal;letter-spacing:0.32px;">Contact Brad</div>
<svg class="abs" style="left:2525px;top:1010px" width="22" height="22" viewBox="0 0 22 22"><path d="M2.5 2.5l17 17 M19.5 2.5l-17 17" fill="none" stroke="#e3000f" stroke-width="4.2" stroke-linecap="butt"/></svg>
<div class="t" style="left:241.5px;top:1067px;font-size:21.5px;color:#323338;font-weight:normal;letter-spacing:-0.73px;">Task 3</div>
<svg class="ic g" style="left:430px;top:1060px;stroke-width:2.3" width="30" height="30" viewBox="0 0 30 30"><path d="M7.3 23.2A11.2 11.2 0 1 0 4.9 19.8L3.6 26.4z M15 9.6v10.8 M9.6 15h10.8"/></svg>
<div class="abs" style="left:693px;top:1056px;width:42px;height:42px;border-radius:50%;border:1.6px solid #c3c6d4;background:#fff;box-shadow:0 0 0 3px #f3f4f8"></div><svg class="ic" style="left:693px;top:1056px;stroke:#c3c6d4;stroke-width:1.7" width="42" height="42" viewBox="0 0 42 42"><circle cx="21" cy="18.2" r="8.6"/><path d="M7.4 34.6Q21 19 34.6 34.6"/></svg>
<div class="abs" style="left:802px;top:1049.75px;width:217px;height:54.5px;background:#fdab3d;"></div>
<div class="t" style="left:846.2px;top:1068px;font-size:21.5px;color:#ffffff;font-weight:normal;letter-spacing:0.21px;">Working on it</div>
<div class="abs" style="left:1045px;top:1060px;width:168px;height:34px;border-radius:17px;background:#037f4c"></div>
<div class="t" style="left:1058.0px;top:1067px;font-size:21.5px;color:#ffffff;font-weight:normal;letter-spacing:-0.45px;">Jun 16, ’22 - ...</div>
<div class="t" style="left:1303.8px;top:1067px;font-size:22px;color:#323338;font-weight:normal;letter-spacing:0.00px;">$2,000</div>
<div class="t" style="left:1507.5px;top:1067px;font-size:22px;color:#323338;font-weight:normal;letter-spacing:0.00px;">$200</div>
<div class="t" style="left:1921.8px;top:1067px;font-size:22px;color:#323338;font-weight:normal;letter-spacing:0.00px;">$2,200</div>
<div class="t" style="left:2127.8px;top:1067px;font-size:22px;color:#323338;font-weight:normal;letter-spacing:0.00px;">$2,000</div>
<div class="abs" style="left:2258.75px;top:1049.75px;width:176.5px;height:54.5px;background:#eb7e8e;"></div>
<div class="t" style="left:2318.8px;top:1067px;font-size:22px;color:#323338;font-weight:normal;letter-spacing:0.00px;">$-200</div>
<div class="t" style="left:1709.5px;top:1068px;font-size:21.5px;color:#323338;font-weight:normal;letter-spacing:0.48px;">Good</div>
<svg class="abs" style="left:2525px;top:1066px" width="22" height="22" viewBox="0 0 22 22"><path d="M2.5 2.5l17 17 M19.5 2.5l-17 17" fill="none" stroke="#e3000f" stroke-width="4.2" stroke-linecap="butt"/></svg>
<div class="t" style="left:1303.8px;top:1174px;font-size:22px;color:#323338;font-weight:normal;letter-spacing:0.00px;">$5,500</div>
<div class="t" style="left:1321.4px;top:1195px;font-size:17px;color:#676879;font-weight:normal;letter-spacing:0.00px;">sum</div>
<div class="t" style="left:1498.3px;top:1174px;font-size:22px;color:#323338;font-weight:normal;letter-spacing:0.00px;">$1,300</div>
<div class="t" style="left:1515.9px;top:1195px;font-size:17px;color:#676879;font-weight:normal;letter-spacing:0.00px;">sum</div>
<div class="t" style="left:1921.8px;top:1174px;font-size:22px;color:#323338;font-weight:normal;letter-spacing:0.00px;">$6,800</div>
<div class="t" style="left:1939.4px;top:1195px;font-size:17px;color:#676879;font-weight:normal;letter-spacing:0.00px;">sum</div>
<div class="t" style="left:2127.8px;top:1174px;font-size:22px;color:#323338;font-weight:normal;letter-spacing:0.00px;">$7,600</div>
<div class="t" style="left:2145.4px;top:1195px;font-size:17px;color:#676879;font-weight:normal;letter-spacing:0.00px;">sum</div>
<div class="t" style="left:2322.5px;top:1174px;font-size:22px;color:#323338;font-weight:normal;letter-spacing:0.00px;">$800</div>
<div class="t" style="left:2330.9px;top:1195px;font-size:17px;color:#676879;font-weight:normal;letter-spacing:0.00px;">sum</div>
<div class="abs" style="left:815px;top:1171px;width:127px;height:37px;background:#fdab3d;"></div>
<div class="abs" style="left:942px;top:1171px;width:64px;height:37px;background:#df2f4a;"></div>
</div>
<div class="abs" style="left:128px;top:1275px;width:221px;height:50px;border:1.5px solid #c5c7d4;border-radius:6px"></div>
<svg class="ic" style="left:144px;top:1287px;stroke-width:2.4" width="26" height="26" viewBox="0 0 26 26"><path d="M13 2v22 M2 13h22"/></svg>
<div class="t" style="left:186.0px;top:1291px;font-size:21.5px;color:#323338;font-weight:normal;letter-spacing:0.37px;">Add new group</div>
<div class="abs" style="left:2400.5px;top:1351px;width:109.5px;height:51px;border-radius:25.5px;background:#0073ea;box-shadow:0 4px 10px rgba(0,0,0,0.12),0 0 14px rgba(0,0,0,0.07)"></div>
<div class="t" style="left:2429.8px;top:1364px;font-size:26px;color:#ffffff;font-weight:normal;letter-spacing:-0.34px;">Help</div>
<div class="abs" style="left:1177.5px;top:305px;width:307px;height:75px;border-radius:10px;background:#fff;box-shadow:0 6px 20px rgba(0,0,0,0.18),0 0 22px rgba(0,0,0,0.1)"></div>
<svg class="ic" style="left:1200px;top:325px;stroke-width:2.3" width="36" height="36" viewBox="1200 325 36 36"><path d="M1207 355L1213.5 348.5 M1208.5 341.5L1216.5 338.2L1221.5 331.8Q1222.6 330.5 1223.8 331.7L1230.5 338.4Q1231.6 339.6 1230.3 340.6L1223.8 344.2L1221 352.3Q1220.4 353.6 1219.2 352.5L1208.5 341.8z"/></svg>
<svg class="ic" style="left:1262px;top:325px;stroke-width:2.3" width="36" height="36" viewBox="1262 325 36 36"><path d="M1273.2 331v23 M1269 335l4.2-4.2 4.2 4.2 M1269 350l4.2 4.2 4.2-4.2 M1284 334.6h8.3 M1284 342.5h8.3 M1284 350.2h8.3"/></svg>
<div class="abs" style="left:1317.5px;top:319px;width:89px;height:47px;border-radius:7px;background:#cce5ff"></div>
<svg class="ic" style="left:1326px;top:325px;stroke-width:2.3" width="36" height="36" viewBox="1326 325 36 36"><path d="M1341 334L1352.5 345.5L1344 352Q1341.5 354 1339 351.8L1334.2 347Q1332 344.6 1334 342.2z M1337.2 339.2Q1336 335 1339 333.5Q1342 332.5 1343.5 336"/><path d="M1352.2 348.5q-2 2.6-2 3.8a2 2 0 0 0 4 0q0-1.2-2-3.8z" fill="#323338" stroke="none"/></svg>
<div class="t" style="left:1374.3px;top:334px;font-size:21.5px;color:#323338;font-weight:normal;letter-spacing:-0.33px;">/ 3</div>
<svg class="ic" style="left:1423px;top:329px;stroke-width:2.4" width="30" height="26" viewBox="0 0 30 26"><path d="M3 17v6.5h22.5V17 M10 17.5l1-5 10.5-10a2.5 2.5 0 0 1 3.5 3.5L14.5 16.5z"/></svg>
<div class="abs" style="left:705px;top:394px;width:1294px;height:462px;border-radius:16px;background:#fff;box-shadow:0 6px 22px rgba(0,0,0,0.2),0 0 24px rgba(0,0,0,0.1)"></div>
<div class="t" style="left:743.0px;top:445px;font-size:23px;color:#323338;font-weight:normal;letter-spacing:0.56px;-webkit-text-stroke:0.35px #323338;">Conditional coloring</div>
<svg class="ic g" style="left:967px;top:443.5px;stroke-width:1.6" width="26" height="26" viewBox="0 0 26 26"><circle cx="13" cy="13" r="11"/><path d="M9.8 10.3a3.2 3.2 0 1 1 4.4 3c-.8.4-1.2 1-1.2 1.8v.7"/><circle cx="13" cy="18.6" r="1" fill="#676879" stroke="none"/></svg>
<svg class="ic" style="left:1607px;top:443px;stroke-width:2" width="26" height="26" viewBox="0 0 26 26"><path d="M3 23.5l1.5-4.5A10 10 0 1 1 8.5 22z M13 17.5l-4-4a2.3 2.3 0 0 1 4-2.5 2.3 2.3 0 0 1 4 2.5z"/></svg>
<div class="t" style="left:1636.7px;top:445px;font-size:22px;color:#323338;font-weight:normal;letter-spacing:-0.43px;">Feedback</div>
<div class="abs" style="left:1768px;top:431.5px;width:193px;height:49.5px;border:1.5px solid #c5c7d4;border-radius:6px"></div>
<div class="t" style="left:1783.0px;top:446px;font-size:21.5px;color:#323338;font-weight:normal;letter-spacing:0.17px;">Save to this view</div>
<svg class="abs" style="left:748px;top:534.0px" width="20" height="32" viewBox="0 0 20 32" fill="#323338"><circle cx="5.8" cy="4" r="2.3"/><circle cx="14.2" cy="4" r="2.3"/><circle cx="5.8" cy="12" r="2.3"/><circle cx="14.2" cy="12" r="2.3"/><circle cx="5.8" cy="20" r="2.3"/><circle cx="14.2" cy="20" r="2.3"/><circle cx="5.8" cy="28" r="2.3"/><circle cx="14.2" cy="28" r="2.3"/></svg>
<div class="abs" style="left:786px;top:531.0px;width:38px;height:38px;border-radius:7px;background:#e02c4b"></div>
<div class="abs" style="left:849px;top:519.5px;width:148px;height:61.0px;border:1.5px solid #c5c7d4;border-radius:6px;background:#fff"></div>
<div class="t" style="left:878.7px;top:540px;font-size:22px;color:#323338;font-weight:normal;letter-spacing:-0.75px;">Cell</div>
<svg class="ic" style="left:955.4px;top:543.0px;stroke:#676879;stroke-width:2.2" width="22" height="14.0" viewBox="0 0 22 14.0"><path d="M3 3l8.0 8.0l8.0 -8.0"/></svg>
<div class="t" style="left:1022.4px;top:540px;font-size:22px;color:#323338;font-weight:normal;letter-spacing:-0.34px;">When</div>
<div class="abs" style="left:1104.5px;top:519.5px;width:273.0px;height:61.0px;border:1.5px solid #c5c7d4;border-radius:6px;background:#fff"></div>
<div class="abs" style="left:1134px;top:534.5px;width:31px;height:31px;border-radius:6px;background:#4eccc6"></div><svg class="ic" style="left:1134px;top:534.5px;stroke:#fff;stroke-width:1.8" width="31" height="31" viewBox="0 0 31 31"><path d="M9 24.5c2.5.5 3.8-.5 4.5-3.5l2.8-11c.6-2.3 2-3 3.8-2.5 M11 16h7 M19.5 18.5l5 5.5 M24.5 18.5l-5 5.5"/></svg>
<div class="t" style="left:1181.5px;top:540px;font-size:22px;color:#323338;font-weight:normal;letter-spacing:0.27px;">Difference</div>
<svg class="ic" style="left:1335.8px;top:543.0px;stroke:#676879;stroke-width:2.2" width="22" height="14.0" viewBox="0 0 22 14.0"><path d="M3 3l8.0 8.0l8.0 -8.0"/></svg>
<div class="abs" style="left:1390.5px;top:519.5px;width:203.0px;height:61.0px;border:1.5px solid #c5c7d4;border-radius:6px;background:#fff"></div>
<div class="t" style="left:1420.5px;top:540px;font-size:22px;color:#323338;font-weight:normal;letter-spacing:0.08px;">contains</div>
<svg class="ic" style="left:1551.5px;top:543.0px;stroke:#676879;stroke-width:2.2" width="22" height="14.0" viewBox="0 0 22 14.0"><path d="M3 3l8.0 8.0l8.0 -8.0"/></svg>
<div class="abs" style="left:1606px;top:519.5px;width:312.5px;height:61.0px;border:1.5px solid #c5c7d4;border-radius:6px;background:#fff"></div>
<div class="abs" style="left:1621px;top:550.0px;width:7px;height:2.2px;background:#323338"></div>
<svg class="ic" style="left:1936.8px;top:540.8px;stroke:#323338;stroke-width:2.3" width="19.5" height="19.5" viewBox="0 0 19.5 19.5"><path d="M2 2l15.5 15.5 M17.5 2l-15.5 15.5"/></svg>
<svg class="abs" style="left:748px;top:609.0px" width="20" height="32" viewBox="0 0 20 32" fill="#323338"><circle cx="5.8" cy="4" r="2.3"/><circle cx="14.2" cy="4" r="2.3"/><circle cx="5.8" cy="12" r="2.3"/><circle cx="14.2" cy="12" r="2.3"/><circle cx="5.8" cy="20" r="2.3"/><circle cx="14.2" cy="20" r="2.3"/><circle cx="5.8" cy="28" r="2.3"/><circle cx="14.2" cy="28" r="2.3"/></svg>
<div class="abs" style="left:786px;top:606.0px;width:38px;height:38px;border-radius:7px;background:#cde992"></div>
<div class="abs" style="left:849px;top:594.5px;width:148px;height:61.0px;border:1.5px solid #c5c7d4;border-radius:6px;background:#fff"></div>
<div class="t" style="left:878.7px;top:615px;font-size:22px;color:#323338;font-weight:normal;letter-spacing:-0.75px;">Cell</div>
<svg class="ic" style="left:955.4px;top:618.0px;stroke:#676879;stroke-width:2.2" width="22" height="14.0" viewBox="0 0 22 14.0"><path d="M3 3l8.0 8.0l8.0 -8.0"/></svg>
<div class="t" style="left:1022.4px;top:615px;font-size:22px;color:#323338;font-weight:normal;letter-spacing:-0.34px;">When</div>
<div class="abs" style="left:1104.5px;top:594.5px;width:273.0px;height:61.0px;border:1.5px solid #c5c7d4;border-radius:6px;background:#fff"></div>
<div class="abs" style="left:1134px;top:609.5px;width:31px;height:31px;border-radius:6px;background:#4eccc6"></div><svg class="ic" style="left:1134px;top:609.5px;stroke:#fff;stroke-width:1.8" width="31" height="31" viewBox="0 0 31 31"><path d="M9 24.5c2.5.5 3.8-.5 4.5-3.5l2.8-11c.6-2.3 2-3 3.8-2.5 M11 16h7 M19.5 18.5l5 5.5 M24.5 18.5l-5 5.5"/></svg>
<div class="t" style="left:1181.5px;top:615px;font-size:22px;color:#323338;font-weight:normal;letter-spacing:0.27px;">Difference</div>
<svg class="ic" style="left:1335.8px;top:618.0px;stroke:#676879;stroke-width:2.2" width="22" height="14.0" viewBox="0 0 22 14.0"><path d="M3 3l8.0 8.0l8.0 -8.0"/></svg>
<div class="abs" style="left:1390.5px;top:594.5px;width:203.0px;height:61.0px;border:1.5px solid #c5c7d4;border-radius:6px;background:#fff"></div>
<div class="t" style="left:1420.5px;top:615px;font-size:22px;color:#323338;font-weight:normal;letter-spacing:-0.24px;">doesn't co...</div>
<svg class="ic" style="left:1551.5px;top:618.0px;stroke:#676879;stroke-width:2.2" width="22" height="14.0" viewBox="0 0 22 14.0"><path d="M3 3l8.0 8.0l8.0 -8.0"/></svg>
<div class="abs" style="left:1606px;top:594.5px;width:312.5px;height:61.0px;border:1.5px solid #c5c7d4;border-radius:6px;background:#fff"></div>
<div class="abs" style="left:1621px;top:625.0px;width:7px;height:2.2px;background:#323338"></div>
<svg class="ic" style="left:1936.8px;top:615.8px;stroke:#323338;stroke-width:2.3" width="19.5" height="19.5" viewBox="0 0 19.5 19.5"><path d="M2 2l15.5 15.5 M17.5 2l-15.5 15.5"/></svg>
<svg class="abs" style="left:748px;top:684.0px" width="20" height="32" viewBox="0 0 20 32" fill="#323338"><circle cx="5.8" cy="4" r="2.3"/><circle cx="14.2" cy="4" r="2.3"/><circle cx="5.8" cy="12" r="2.3"/><circle cx="14.2" cy="12" r="2.3"/><circle cx="5.8" cy="20" r="2.3"/><circle cx="14.2" cy="20" r="2.3"/><circle cx="5.8" cy="28" r="2.3"/><circle cx="14.2" cy="28" r="2.3"/></svg>
<div class="abs" style="left:786px;top:681.0px;width:38px;height:38px;border-radius:7px;background:#ff7bc0"></div>
<div class="abs" style="left:849px;top:669.5px;width:148px;height:61.0px;border:1.5px solid #c5c7d4;border-radius:6px;background:#fff"></div>
<div class="t" style="left:878.7px;top:690px;font-size:22px;color:#323338;font-weight:normal;letter-spacing:-0.75px;">Cell</div>
<svg class="ic" style="left:955.4px;top:693.0px;stroke:#676879;stroke-width:2.2" width="22" height="14.0" viewBox="0 0 22 14.0"><path d="M3 3l8.0 8.0l8.0 -8.0"/></svg>
<div class="t" style="left:1022.4px;top:690px;font-size:22px;color:#323338;font-weight:normal;letter-spacing:-0.34px;">When</div>
<div class="abs" style="left:1104.5px;top:669.5px;width:273.0px;height:61.0px;border:1.5px solid #c5c7d4;border-radius:6px;background:#fff"></div>
<div class="abs" style="left:1134px;top:684.5px;width:31px;height:31px;border-radius:6px;background:#4eccc6"></div><svg class="ic" style="left:1134px;top:684.5px;stroke:#fff;stroke-width:1.8" width="31" height="31" viewBox="0 0 31 31"><path d="M9 24.5c2.5.5 3.8-.5 4.5-3.5l2.8-11c.6-2.3 2-3 3.8-2.5 M11 16h7 M19.5 18.5l5 5.5 M24.5 18.5l-5 5.5"/></svg>
<div class="t" style="left:1181.5px;top:690px;font-size:22px;color:#323338;font-weight:normal;letter-spacing:-0.24px;">New Formula</div>
<svg class="ic" style="left:1335.8px;top:693.0px;stroke:#676879;stroke-width:2.2" width="22" height="14.0" viewBox="0 0 22 14.0"><path d="M3 3l8.0 8.0l8.0 -8.0"/></svg>
<div class="abs" style="left:1390.5px;top:669.5px;width:203.0px;height:61.0px;border:1.5px solid #c5c7d4;border-radius:6px;background:#fff"></div>
<div class="t" style="left:1420.5px;top:690px;font-size:22px;color:#323338;font-weight:normal;letter-spacing:-1.34px;">is</div>
<svg class="ic" style="left:1551.5px;top:693.0px;stroke:#676879;stroke-width:2.2" width="22" height="14.0" viewBox="0 0 22 14.0"><path d="M3 3l8.0 8.0l8.0 -8.0"/></svg>
<div class="abs" style="left:1606px;top:669.5px;width:312.5px;height:61.0px;border:1.5px solid #c5c7d4;border-radius:6px;background:#fff"></div>
<div class="abs" style="left:1629px;top:681.2px;width:196px;height:37.6px;border-radius:7px;background:#cce5ff"></div>
<div class="t" style="left:1642.0px;top:690px;font-size:22px;color:#323338;font-weight:normal;letter-spacing:0.08px;">Contact Brad</div>
<svg class="ic" style="left:1790.6px;top:692.0px;stroke:#323338;stroke-width:2.2" width="16" height="16" viewBox="0 0 16 16"><path d="M2 2l12 12 M14 2l-12 12"/></svg>
<svg class="ic" style="left:1876.3px;top:693.0px;stroke:#676879;stroke-width:2.2" width="22" height="14.0" viewBox="0 0 22 14.0"><path d="M3 3l8.0 8.0l8.0 -8.0"/></svg>
<svg class="ic" style="left:1936.8px;top:690.8px;stroke:#323338;stroke-width:2.3" width="19.5" height="19.5" viewBox="0 0 19.5 19.5"><path d="M2 2l15.5 15.5 M17.5 2l-15.5 15.5"/></svg>
<div class="t" style="left:756.5px;top:783px;font-size:21px;color:#323338;font-weight:normal;letter-spacing:0.76px;">+ New condition</div>
<div class="abs" style="left:735px;top:659px;width:1235px;height:80px;border:4px solid #ff9d00"></div>
<div class="abs" style="left:1618px;top:870px;width:239px;height:247px;border:4px solid #ff9d00"></div>
</body></html>
